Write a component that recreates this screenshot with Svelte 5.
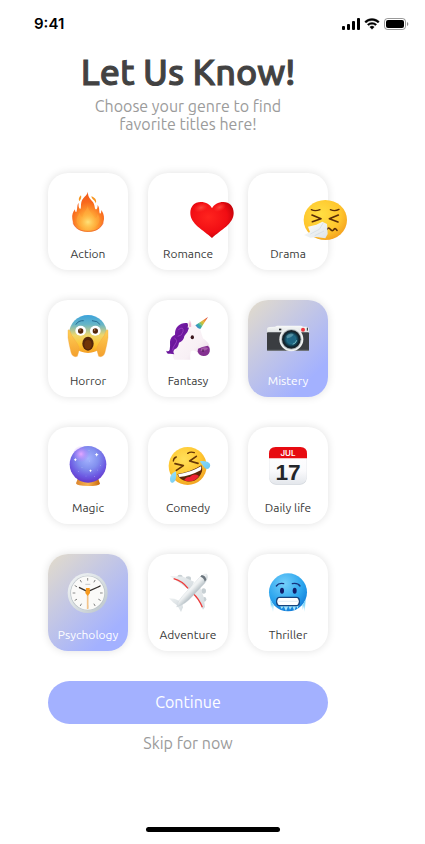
<script>
  let genres = $state([
    { name: 'Action', icon: 'fire', view: '78 78 132 132', chosen: false },
    { name: 'Romance', icon: 'heart', view: '150 96 132 132', chosen: false, overhang: 42 },
    { name: 'Drama', icon: 'sneeze', view: '189 96 132 132', chosen: false, overhang: 55 },
    { name: 'Horror', icon: 'scream', view: '78 78 132 132', chosen: false },
    { name: 'Fantasy', icon: 'unicorn', view: '78 78 132 132', chosen: false },
    { name: 'Mistery', icon: 'camera', view: '78 78 132 132', chosen: true },
    { name: 'Magic', icon: 'orb', view: '78 75 132 132', chosen: false },
    { name: 'Comedy', icon: 'laugh', view: '78 75 132 132', chosen: false },
    { name: 'Daily life', icon: 'calendar', view: '78 75 132 132', chosen: false },
    { name: 'Psychology', icon: 'clock', view: '78 75 132 132', chosen: true },
    { name: 'Adventure', icon: 'plane', view: '378 75 132 132', chosen: false },
    { name: 'Thriller', icon: 'frozen', view: '678 75 132 132', chosen: false }
  ]);

  const ticks = Array.from({ length: 12 }, (_, i) => i * 30);
</script>

{#snippet art(kind)}
  {#if kind === 'fire'}
    <defs>
      <radialGradient id="fire-a" cx=".5" cy=".78" r=".75">
        <stop offset="0" stop-color="#ffd45c" />
        <stop offset=".35" stop-color="#ffa334" />
        <stop offset=".7" stop-color="#f8681d" />
        <stop offset="1" stop-color="#ef5a1c" />
      </radialGradient>
      <radialGradient id="fire-b"><stop offset="0" stop-color="#ffe27a" /><stop offset="1" stop-color="#ffb33c" stop-opacity="0" /></radialGradient>
    </defs>
    <path fill="url(#fire-a)" d="M144 80C141 92 127 98 124 112C122 120 124 128 121 132C116 130 115 122 116 114C110 120 113 132 109 141C106 142 105 138 105 133C99 141 95 150 97 162C99 186 118 201 144 201C171 201 190 185 192 162C193 150 188 142 184 135C184 141 183 145 180 146C176 139 180 129 173 120C173 129 171 134 167 133C163 129 165 118 158 110C151 102 143 96 144 80Z" />
    <path fill="#f79620" d="M123 91C116 97 115 103 118 109C123 103 125 98 123 91ZM154 94C155 103 165 105 167 115C172 107 165 97 154 94Z" />
    <path fill="#ffb744" opacity=".35" d="M143 123C139 137 129 143 128 158C123 155 120 149 120 143C111 153 106 166 113 177C121 192 162 195 174 178C182 166 179 155 173 147C172 155 168 160 164 160C160 148 147 141 143 123Z" />
    <ellipse cx="144" cy="171" rx="29" ry="25" fill="url(#fire-b)" />
    <path d="M99 173C106 193 124 199 145 199C166 199 182 191 190 173" fill="none" stroke="#e9582c" stroke-width="3" opacity=".65" />
  {:else if kind === 'heart'}
    <defs>
      <radialGradient id="heart-a" cx=".42" cy=".42" r=".66"><stop offset="0" stop-color="#ff241e" /><stop offset=".65" stop-color="#f10d13" /><stop offset="1" stop-color="#b90008" /></radialGradient>
      <radialGradient id="heart-b"><stop offset="0" stop-color="#f9463e" /><stop offset="1" stop-color="#ff352c" stop-opacity="0" /></radialGradient>
    </defs>
    <path fill="url(#heart-a)" d="M216 219C190 195 151 177 151 144C151 125 163 111 182 111C198 111 211 119 216 130C221 119 235 111 250 111C269 111 281 125 281 144C281 177 242 195 216 219Z" />
    <ellipse cx="183" cy="128" rx="22" ry="13" fill="url(#heart-b)" transform="rotate(-18 183 128)" />
    <ellipse cx="239" cy="127" rx="20" ry="12" fill="url(#heart-b)" transform="rotate(-25 239 127)" />
  {:else if kind === 'sneeze'}
    <defs>
      <radialGradient id="sneeze-a" cx=".4" cy=".35" r=".7"><stop offset="0" stop-color="#ffdf43" /><stop offset=".65" stop-color="#ffc62d" /><stop offset="1" stop-color="#f4a01f" /></radialGradient>
      <linearGradient id="sneeze-b" x2="1" y2="1"><stop stop-color="#fff" /><stop offset="1" stop-color="#dde3e7" /></linearGradient>
    </defs>
    <ellipse cx="256" cy="165" rx="65" ry="60" fill="url(#sneeze-a)" />
    <g fill="none" stroke="#5a2d08" stroke-width="5" stroke-linecap="round" stroke-linejoin="round">
      <path d="M214 134Q225 140 240 134M271 134Q285 140 297 133" stroke-width="4" />
      <path d="M216 150L243 161L217 170M295 150L268 161L294 171" />
      <path d="M261 193Q266 185 271 193Q277 201 282 193Q286 188 291 196" />
    </g>
    <path fill="url(#sneeze-b)" d="M192 210L210 201L204 185L229 179L247 170L261 177L263 207L256 220L229 216L211 218Z" />
    <path fill="none" stroke="#cfd9df" stroke-width="2" d="M211 207L238 193L250 173M224 212L252 198" />
  {:else if kind === 'scream'}
    <defs>
      <linearGradient id="scream-a" x2="0" y2="1"><stop stop-color="#3ba3dc" /><stop offset=".25" stop-color="#67b5c6" /><stop offset=".53" stop-color="#eed66c" /><stop offset=".8" stop-color="#ffc42f" /><stop offset="1" stop-color="#f49d26" /></linearGradient>
      <linearGradient id="scream-b" x2="0" y2="1"><stop stop-color="#ffd057" /><stop offset="1" stop-color="#f4a02d" /></linearGradient>
    </defs>
    <ellipse cx="144" cy="126" rx="57" ry="57" fill="url(#scream-a)" />
    <g fill="#fff"><ellipse cx="122" cy="116" rx="16" ry="15" /><ellipse cx="166" cy="116" rx="16" ry="15" /></g>
    <g fill="#54270b"><ellipse cx="122" cy="117" rx="8" ry="8" /><ellipse cx="166" cy="117" rx="8" ry="8" /><ellipse cx="144" cy="155" rx="17" ry="21" /></g>
    <circle cx="120" cy="114" r="2" fill="#c39a76" /><circle cx="164" cy="114" r="2" fill="#c39a76" />
    <ellipse cx="144" cy="158" rx="11" ry="14" fill="#713508" />
    <path d="M108 97Q115 85 130 86M157 86Q173 86 180 97" fill="none" stroke="#286c91" stroke-width="3" stroke-linecap="round" />
    <g fill="url(#scream-b)" stroke="#f0a540" stroke-width="1">
      <path d="M84 116Q84 111 89 115L95 130L108 149Q120 164 117 176L112 193Q98 198 93 181Q87 157 84 137Z" />
      <path d="M204 116Q204 111 199 115L193 130L180 149Q168 164 171 176L176 193Q190 198 195 181Q201 157 204 137Z" />
    </g>
  {:else if kind === 'unicorn'}
    <defs>
      <linearGradient id="uni-a" x2="1" y2="1"><stop stop-color="#fff9fc" /><stop offset=".65" stop-color="#f8f0f5" /><stop offset="1" stop-color="#e6d2e4" /></linearGradient>
      <linearGradient id="uni-h" gradientUnits="userSpaceOnUse" x1="170" y1="108" x2="202" y2="78"><stop stop-color="#3b7fd6" /><stop offset=".28" stop-color="#38b3a0" /><stop offset=".5" stop-color="#c9c53b" /><stop offset=".72" stop-color="#f29a2f" /><stop offset="1" stop-color="#d8413e" /></linearGradient>
      <linearGradient id="uni-m" x2="1" y2="1"><stop stop-color="#8c25bd" /><stop offset=".5" stop-color="#6a169a" /><stop offset="1" stop-color="#8f30bd" /></linearGradient>
    </defs>
    <path fill="url(#uni-a)" d="M140 97L149 83L157 98Q170 95 179 105Q183 122 189 139Q207 151 209 166Q211 187 195 191Q178 193 170 179Q158 172 152 179Q149 193 151 203L103 203Q92 188 104 166L114 135Q124 103 140 97Z" />
    <path fill="url(#uni-h)" d="M166 100L204 75L181 111Q172 110 166 100Z" />
    <path d="M177 94L188 102M187 87L196 93" stroke="#fff" stroke-width="1" opacity=".6" />
    <path fill="url(#uni-m)" d="M142 93Q125 91 114 102Q104 112 105 128Q91 134 90 149Q91 163 89 173Q86 181 79 176Q79 187 91 185L103 187Q97 179 104 172Q115 167 117 152Q132 146 133 132Q144 122 147 107Z" />
    <path d="M115 113Q132 101 129 119Q126 132 113 133M103 138Q115 144 106 156Q98 166 98 175" fill="none" stroke="#a64acb" stroke-width="2" />
    <path fill="#f9e8f0" d="M143 107Q143 92 149 83Q156 93 156 105Z" /><path d="M147 104Q147 94 150 88Q154 96 153 105Z" fill="#efb3cb" />
    <ellipse cx="157" cy="136" rx="5" ry="6" fill="#3b171d" />
    <path fill="#843191" d="M174 170Q186 164 203 161Q211 166 209 179Q204 193 190 192Q175 190 173 178Z" />
    <path fill="#a35aa8" d="M184 167Q198 164 204 169Q198 178 182 177Z" /><ellipse cx="189" cy="176" rx="2" ry="4" fill="#501955" />
  {:else if kind === 'camera'}
    <defs>
      <linearGradient id="cam-a" x2="0" y2="1"><stop stop-color="#f9faf9" /><stop offset="1" stop-color="#d3d8da" /></linearGradient>
      <radialGradient id="cam-l"><stop stop-color="#73b8cc" /><stop offset=".5" stop-color="#257794" /><stop offset="1" stop-color="#0b2734" /></radialGradient>
    </defs>
    <path fill="url(#cam-a)" d="M81 111Q82 105 89 105L105 104L111 101H183L190 104H200Q207 105 207 112V129H81Z" />
    <rect x="81" y="121" width="126" height="56" rx="3" fill="#3a3d41" />
    <path d="M82 175H206" stroke="#9da3a8" stroke-width="2" />
    <rect x="117" y="110" width="7" height="5" fill="#24292c" />
    <circle cx="189" cy="113" r="6" fill="#ef343d" /><path d="M202 107V116" stroke="#24292c" stroke-width="3" />
    <circle cx="154" cy="142" r="36" fill="#eff1f1" /><circle cx="154" cy="142" r="31" fill="#b9c0c3" />
    <circle cx="154" cy="142" r="28" fill="#18242b" /><circle cx="154" cy="142" r="23" fill="url(#cam-l)" />
    <circle cx="154" cy="142" r="12" fill="#1f6683" />
    <path d="M139 132Q148 121 161 126Q156 137 141 139Z" fill="#b1dfe3" opacity=".35" />
    <path d="M158 157Q168 154 170 145" fill="none" stroke="#76bbc2" stroke-width="3" />
  {:else if kind === 'orb'}
    <defs>
      <radialGradient id="orb-a" cx=".5" cy=".34" r=".7"><stop stop-color="#a5b4ff" /><stop offset=".4" stop-color="#8391ef" /><stop offset=".72" stop-color="#6c59e2" /><stop offset="1" stop-color="#6530c4" /></radialGradient>
      <radialGradient id="orb-p"><stop stop-color="#e5a9ff" /><stop offset="1" stop-color="#b174ff" stop-opacity="0" /></radialGradient>
      <linearGradient id="orb-b" x2="1"><stop stop-color="#db842c" /><stop offset=".5" stop-color="#f7b554" /><stop offset="1" stop-color="#c9680c" /></linearGradient>
    </defs>
    <path fill="url(#orb-b)" d="M113 177H175L180 191Q177 198 144 198Q110 198 108 190Z" />
    <circle cx="144" cy="133" r="55" fill="url(#orb-a)" /><circle cx="123" cy="102" r="25" fill="url(#orb-p)" />
    <path fill="#fff" d="M170 98L172 102L176 104L172 106L170 110L168 106L164 104L168 102ZM106 114L108 118L111 119L108 121L106 124L104 121L101 119L104 118ZM151 148L153 151L156 152L153 154L151 157L150 154L147 152L150 151Z" />
    <g fill="#e0d9ff"><circle cx="149" cy="123" r="1" /><circle cx="126" cy="142" r="1" /><circle cx="116" cy="155" r="1" /><circle cx="173" cy="150" r="1" /><circle cx="181" cy="136" r="1" /><circle cx="138" cy="168" r="1" /><circle cx="163" cy="170" r="1" /><circle cx="147" cy="91" r="1" /></g>
  {:else if kind === 'laugh'}
    <defs>
      <radialGradient id="laugh-a" cx=".4" cy=".32" r=".75"><stop stop-color="#ffe05a" /><stop offset=".6" stop-color="#ffc62f" /><stop offset="1" stop-color="#ef9e21" /></radialGradient>
      <linearGradient id="laugh-t" x2="1" y2="1"><stop stop-color="#b8f1ff" /><stop offset="1" stop-color="#45b3e8" /></linearGradient>
    </defs>
    <circle cx="143" cy="138" r="57" fill="url(#laugh-a)" />
    <g fill="none" stroke="#673707" stroke-width="5" stroke-linecap="round" stroke-linejoin="round">
      <path d="M100 123Q101 113 109 111M143 100Q152 94 163 98" stroke-width="4" />
      <path d="M105 131L130 137L109 151M169 109L149 123L174 130" />
    </g>
    <path fill="#5c2709" d="M112 162Q151 157 184 136Q192 152 177 171Q163 188 139 184Q119 180 112 162Z" />
    <path fill="#fff" d="M114 163Q151 158 183 139Q186 145 182 151Q151 168 118 171Z" />
    <path fill="#ee2332" d="M132 181Q139 169 149 171Q163 158 177 168Q164 188 139 183Z" />
    <path fill="url(#laugh-t)" d="M108 154Q92 160 90 175Q89 190 99 188Q111 185 108 154ZM179 124Q188 121 202 125Q213 130 210 140Q205 151 195 145Z" />
  {:else if kind === 'calendar'}
    <defs><linearGradient id="cal-a" x2="0" y2="1"><stop stop-color="#fff" /><stop offset=".65" stop-color="#fafafc" /><stop offset="1" stop-color="#e4e7ec" /></linearGradient></defs>
    <rect x="88" y="83" width="112" height="111" rx="20" fill="#d0d5db" />
    <rect x="88" y="81" width="112" height="111" rx="20" fill="url(#cal-a)" />
    <path d="M87 115V101Q87 81 107 81H181Q201 81 201 101V115Z" fill="#e70b11" />
    <text x="144" y="107" text-anchor="middle" class="month">JUL</text>
    <text x="144" y="180" text-anchor="middle" class="day">17</text>
  {:else if kind === 'clock'}
    <defs><linearGradient id="clock-a" x2="1" y2="1"><stop stop-color="#f3f6f7" /><stop offset=".5" stop-color="#dae0e3" /><stop offset="1" stop-color="#b9c3c8" /></linearGradient></defs>
    <circle cx="143" cy="138" r="60" fill="url(#clock-a)" /><circle cx="143" cy="138" r="52" fill="#b9c1c5" /><circle cx="143" cy="138" r="50" fill="#fafaf8" />
    {#each ticks as angle}
      <path d="M143 93V101" stroke="#555" stroke-width="2" transform="rotate({angle} 143 138)" />
    {/each}
    <path d="M136 112H151" stroke="#c4c7c8" stroke-width="3" />
    <path d="M143 134L117 121M143 134L181 117" stroke="#35302d" stroke-width="4" />
    <path d="M143 136V186" stroke="#f4c489" stroke-width="5" /><path d="M138 123H149L150 138L143 147L136 138Z" fill="#f6991c" />
  {:else if kind === 'plane'}
    <defs>
      <linearGradient id="plane-w" x2="1" y2="1"><stop stop-color="#eef1f2" /><stop offset="1" stop-color="#d3dade" /></linearGradient>
      <linearGradient id="plane-a" gradientUnits="userSpaceOnUse" x1="438" y1="122" x2="462" y2="146"><stop stop-color="#fff" /><stop offset=".45" stop-color="#edf0f1" /><stop offset="1" stop-color="#aeb9bf" /></linearGradient>
    </defs>
    <g fill="#c8d0d4">
      <ellipse cx="420" cy="89" rx="8" ry="6" /><ellipse cx="445" cy="95" rx="8" ry="7" />
      <ellipse cx="491" cy="132" rx="7" ry="8" /><ellipse cx="493" cy="157" rx="6" ry="7" />
    </g>
    <g fill="url(#plane-w)">
      <path d="M390 87L430 89L462 104L450 130L437 121L405 98Z" />
      <path d="M462 133L480 120L491 150L495 180L489 188L473 155L454 138Z" />
      <path d="M387 154L403 155L426 165L415 178L399 166Z" />
      <path d="M411 174L426 164L429 181L423 195Z" />
    </g>
    <path d="M401 95Q427 102 444 124M457 137Q478 156 487 181" fill="none" stroke="#ee3c3b" stroke-width="4" />
    <path fill="url(#plane-a)" stroke="#c3ccd1" stroke-width="1" d="M410 180Q412 162 431 143L468 103Q486 80 500 81Q507 91 494 109L455 150Q436 172 410 180Z" />
    <path d="M485 84Q496 85 499 98L494 104Q493 93 481 89Z" fill="#6b757d" />
  {:else if kind === 'frozen'}
    <defs>
      <radialGradient id="ice-a" cx=".4" cy=".27" r=".75"><stop stop-color="#75d0fb" /><stop offset=".65" stop-color="#2ba4ed" /><stop offset="1" stop-color="#127dd9" /></radialGradient>
      <linearGradient id="ice-b" x2="0" y2="1"><stop stop-color="#5ccbfa" /><stop offset="1" stop-color="#c7effc" /></linearGradient>
    </defs>
    <circle cx="744" cy="136" r="57" fill="url(#ice-a)" />
    <path d="M709 117Q716 107 731 110M757 110Q773 107 780 117" fill="none" stroke="#16327c" stroke-width="4" stroke-linecap="round" />
    <ellipse cx="726" cy="131" rx="6" ry="9" fill="#111f6c" /><ellipse cx="764" cy="131" rx="6" ry="9" fill="#111f6c" />
    <path fill="url(#ice-b)" d="M691 158L701 174L699 195L696 173L693 184ZM797 158L787 174L788 189L792 176L794 195ZM713 174L776 174L773 186L768 177L763 192L757 178L750 188L745 177L738 192L731 178L725 186L720 176Z" />
    <rect x="708" y="149" width="72" height="29" rx="12" fill="#17447f" />
    <path d="M716 153H772Q781 163 772 174H716Q707 163 716 153Z" fill="#fff" />
    <path d="M713 163H776" stroke="#d3e4f0" stroke-width="2" />
  {/if}
{/snippet}

<div class="screen">
  <header class="status">
    <time>9:41</time>
    <div class="signals" aria-hidden="true">
      <svg width="18" height="12" viewBox="0 0 18 12"><rect y="8" width="3" height="4" rx="1" /><rect x="5" y="6" width="3" height="6" rx="1" /><rect x="10" y="3" width="3" height="9" rx="1" /><rect x="15" width="3" height="12" rx="1" /></svg>
      <svg width="16" height="12" viewBox="0 0 16 12"><path d="M8 2.500C10.300 2.500 12.400 3.400 14 4.900L15.300 3.600C13.400 1.700 10.800.6 8 .6S2.600 1.700.7 3.600L2 4.900A8.700 8.700 0 0 1 8 2.500ZM8 6.300C9.300 6.300 10.500 6.800 11.400 7.600L12.700 6.300A6.900 6.900 0 0 0 3.300 6.300L4.600 7.600A5 5 0 0 1 8 6.300ZM10.200 8.900A3.400 3.400 0 0 0 5.800 8.900L8 11.300Z" stroke="#000" stroke-width=".4" /></svg>
      <svg width="25" height="12" viewBox="0 0 25 12"><rect x=".5" y=".5" width="21" height="11" rx="3" fill="none" stroke="#000" opacity=".4" /><rect x="2" y="2" width="18" height="8" rx="2" /><path d="M23 4V8Q24.300 7.400 24.300 6T23 4Z" opacity=".45" /></svg>
    </div>
  </header>

  <main>
    <h1>Let Us Know!</h1>
    <p>Choose your genre to find<br />favorite titles here!</p>

    <div class="genres">
      {#each genres as genre}
        <button
          type="button"
          class="card"
          class:chosen={genre.chosen}
          aria-pressed={genre.chosen}
          onclick={() => (genre.chosen = !genre.chosen)}
        >
          <span class="picture">
            <svg
              class:overhang={genre.overhang}
              style:left={genre.overhang ? `${genre.overhang}px` : null}
              viewBox={genre.view}
              aria-hidden="true">{@render art(genre.icon)}</svg>
          </span>
          <span class="name">{genre.name}</span>
        </button>
      {/each}
    </div>

    <button type="button" class="continue">Continue</button>
    <a class="skip" href="#skip">Skip for now</a>
  </main>

  <div class="home"></div>
</div>

<style>
  :global(body) {
    background: #fff;
  }
  .screen {
    min-height: 100vh;
    display: flex;
    flex-direction: column;
    box-sizing: border-box;
    font-family: Ubuntu, 'Noto Sans', sans-serif;
    background: #fff;
  }
  .status {
    height: 48px;
    display: flex;
    align-items: center;
    justify-content: space-between;
    padding: 0 16px 0 34px;
    color: #000;
  }
  .status time {
    font: 600 15px/20px Inter, sans-serif;
  }
  .signals {
    display: flex;
    align-items: center;
    gap: 4px;
  }
  main {
    flex: 1;
    display: flex;
    flex-direction: column;
    padding: 4px 97px 0 48px;
    text-align: center;
  }
  h1 {
    margin: 0 0 5px;
    font-size: 36px;
    line-height: 40px;
    font-weight: 500;
    color: #424242;
    -webkit-text-stroke: 1px #424242;
    white-space: nowrap;
  }
  p {
    margin: 0 0 40px;
    font-size: 16px;
    line-height: 18px;
    color: #9b9b9b;
  }
  .genres {
    display: grid;
    grid-template-columns: repeat(3, 1fr);
    gap: 30px 20px;
    margin-bottom: 30px;
  }
  button {
    border: 0;
    font-family: inherit;
    cursor: pointer;
  }
  .card {
    position: relative;
    display: flex;
    flex-direction: column;
    align-items: center;
    gap: 11px;
    padding: 18px 0 8px;
    border-radius: 20px;
    background: #fff;
    color: #3a3a3a;
    box-shadow: 0 0 8px rgba(0, 0, 0, 0.12);
  }
  .card.chosen {
    background: linear-gradient(135deg, #e3dccb 0%, #a3b1ff 80%);
    color: #fff;
  }
  .picture {
    display: block;
    width: 44px;
    height: 44px;
  }
  .picture svg {
    display: block;
    width: 44px;
    height: 44px;
    overflow: visible;
  }
  .picture .overhang {
    position: absolute;
    top: 24px;
    z-index: 1;
  }
  .name {
    font-size: 12px;
    line-height: 16px;
    white-space: nowrap;
  }
  .month {
    font: 600 24px Inter, sans-serif;
    fill: #fff;
  }
  .day {
    font: 700 68px 'Liberation Sans', sans-serif;
    fill: #23262a;
  }
  .continue {
    padding: 11px 0 12px;
    border-radius: 22px;
    background: #a3b1ff;
    color: #fff;
    font-size: 16px;
    line-height: 20px;
  }
  .skip {
    align-self: center;
    margin-top: 9px;
    font-size: 16px;
    line-height: 20px;
    color: #9b9b9b;
    text-decoration: none;
  }
  .home {
    align-self: center;
    width: 134px;
    height: 5px;
    margin-bottom: 12px;
    border-radius: 3px;
    background: #000;
  }
</style>
